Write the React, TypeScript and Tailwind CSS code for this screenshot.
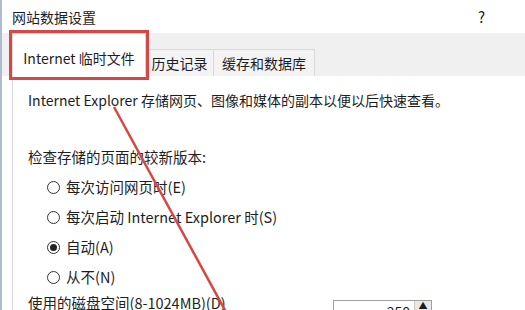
import React from 'react';

const OPTIONS = [
  { label: '每次访问网页时(E)', checked: false },
  { label: '每次启动 Internet Explorer 时(S)', checked: false },
  { label: '自动(A)', checked: true },
  { label: '从不(N)', checked: false },
];

const Radio: React.FC<{ checked: boolean }> = ({ checked }) => (
  <span className="flex h-[13px] w-[13px] shrink-0 items-center justify-center rounded-full border border-[#333] bg-white">
    {checked && <span className="h-[7px] w-[7px] rounded-full bg-[#222]" />}
  </span>
);

export default function App() {
  return (
    <div
      className="relative h-[310px] w-[525px] overflow-hidden border-l-2 border-[#aebccb] bg-white text-[#1e1e1e]"
      style={{ fontFamily: '"Noto Sans CJK SC", "Noto Sans", sans-serif' }}
    >
      {/* title bar */}
      <div className="flex h-[33px] items-center justify-between pl-[10px] pr-[40px] pt-[2px] text-[14px]">
        <span>网站数据设置</span>
        <span className="text-[15px]">?</span>
      </div>

      {/* tab strip */}
      <div className="flex h-[43px] items-end bg-[#f0f0f0] pl-[10px] text-[14px]">
        <div className="flex h-[43px] w-[134px] items-center justify-center border border-b-0 border-[#d9d9d9] bg-white pt-[6px]">
          Internet 临时文件
        </div>
        <div className="flex h-[27px] w-[68px] items-center justify-center border border-b-0 border-l-0 border-[#d9d9d9] bg-[#f3f3f3]">
          历史记录
        </div>
        <div className="flex h-[27px] w-[101px] items-center justify-center border border-b-0 border-l-0 border-[#d9d9d9] bg-[#f3f3f3]">
          缓存和数据库
        </div>
      </div>

      {/* tab panel */}
      <div className="ml-[10px] h-full border-l border-[#d9d9d9] pl-[15px] pt-[14px] text-[14.5px] leading-[20px]">
        <p className="whitespace-nowrap text-[14px]">Internet Explorer 存储网页、图像和媒体的副本以便以后快速查看。</p>
        <p className="mt-[37px]">检查存储的页面的较新版本:</p>
        <div className="mt-[10px] flex flex-col gap-[10px] pl-[19px]">
          {OPTIONS.map((o) => (
            <div key={o.label} className="flex h-[20px] items-center gap-[6px] whitespace-nowrap">
              <Radio checked={o.checked} />
              <span>{o.label}</span>
            </div>
          ))}
        </div>
        <div className="mt-[6px] flex items-start">
          <span className="w-[305px] whitespace-nowrap">使用的磁盘空间(8-1024MB)(D)</span>
          <div className="mt-[7px] flex h-[22px] w-[99px] border border-[#a0a0a0]">
            <span className="flex-1 pr-[4px] text-right text-[14px] leading-[20px]">250</span>
            <span className="flex w-[17px] items-start justify-center border-l border-[#c8c8c8] bg-[#e9e9e9] text-[9px] leading-[10px]">▲</span>
          </div>
        </div>
      </div>

      {/* annotation: red highlight box */}
      <div className="absolute left-[7px] top-[30px] h-[50px] w-[140px] border-[3px] border-[#d64747]" />

      {/* annotation: red arrow line */}
      <svg className="absolute inset-0" width="525" height="310" viewBox="0 0 525 310">
        <line x1="112" y1="107" x2="224" y2="312" stroke="#d9463f" strokeWidth="2.5" />
      </svg>
    </div>
  );
}
